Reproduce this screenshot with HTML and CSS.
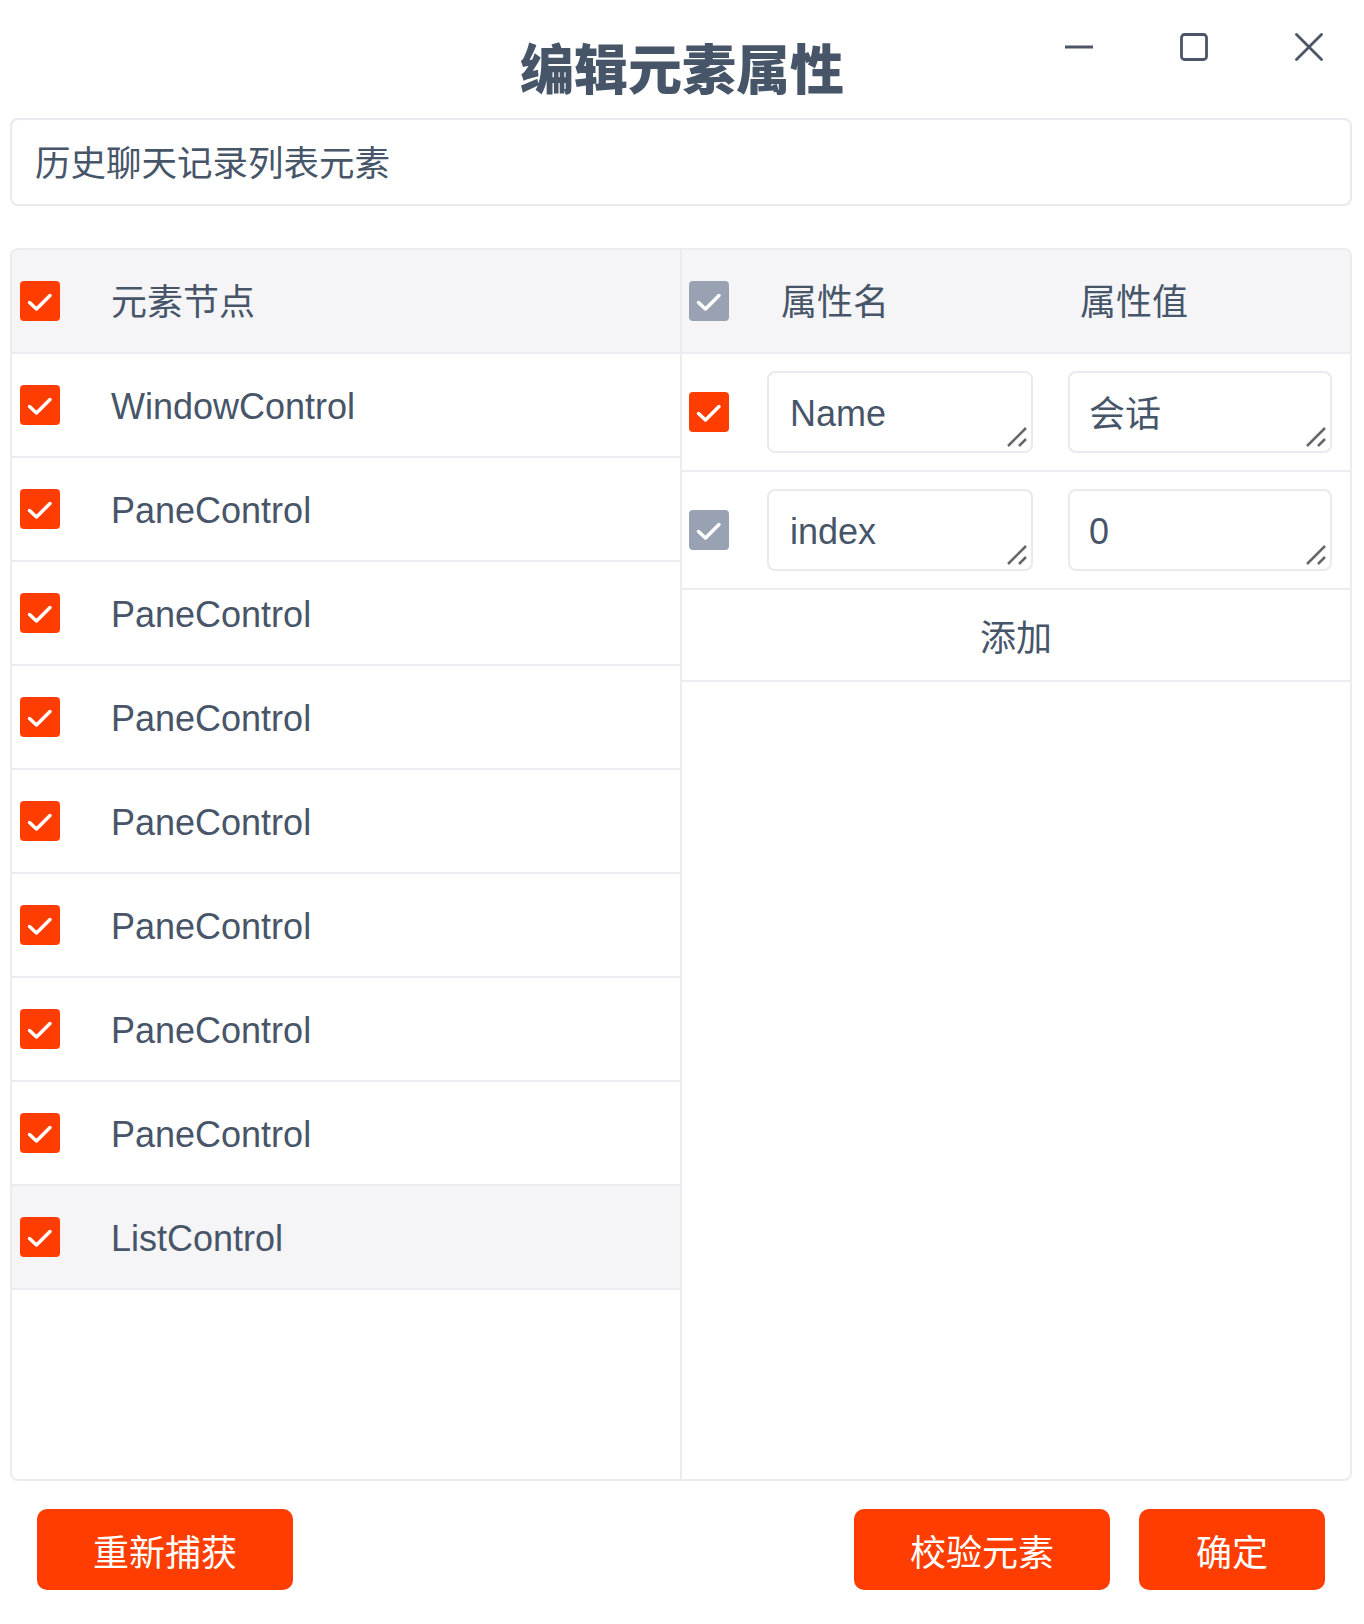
FILE: index.html
```html
<!DOCTYPE html>
<html lang="zh-CN">
<head>
<meta charset="utf-8">
<title>编辑元素属性</title>
<link rel="stylesheet" href="styles.css">
</head>
<body>
<div class="window">
  <header class="titlebar">
    <h1 class="title">编辑元素属性</h1>
    <div class="win-ctrls">
      <svg class="ctrl" viewBox="0 0 28 28" width="28" height="28"><line x1="0" y1="14" x2="28" y2="14"/></svg>
      <svg class="ctrl" viewBox="0 0 28 28" width="28" height="28"><rect x="1.5" y="1.5" width="25" height="25" rx="3"/></svg>
      <svg class="ctrl" viewBox="0 0 28 28" width="28" height="28"><line x1="1.5" y1="1.5" x2="26.5" y2="26.5"/><line x1="26.5" y1="1.5" x2="1.5" y2="26.5"/></svg>
    </div>
  </header>

  <div class="name-input">历史聊天记录列表元素</div>

  <div class="table">
    <div class="col-left">
      <div class="lrow head"><span class="cb on"><svg viewBox="0 0 40 40"><polyline points="9.5,21.5 16.5,28 30,14.5"/></svg></span><span class="label cjk">元素节点</span></div>
      <div class="lrow"><span class="cb on"><svg viewBox="0 0 40 40"><polyline points="9.5,21.5 16.5,28 30,14.5"/></svg></span><span class="label">WindowControl</span></div>
      <div class="lrow"><span class="cb on"><svg viewBox="0 0 40 40"><polyline points="9.5,21.5 16.5,28 30,14.5"/></svg></span><span class="label">PaneControl</span></div>
      <div class="lrow"><span class="cb on"><svg viewBox="0 0 40 40"><polyline points="9.5,21.5 16.5,28 30,14.5"/></svg></span><span class="label">PaneControl</span></div>
      <div class="lrow"><span class="cb on"><svg viewBox="0 0 40 40"><polyline points="9.5,21.5 16.5,28 30,14.5"/></svg></span><span class="label">PaneControl</span></div>
      <div class="lrow"><span class="cb on"><svg viewBox="0 0 40 40"><polyline points="9.5,21.5 16.5,28 30,14.5"/></svg></span><span class="label">PaneControl</span></div>
      <div class="lrow"><span class="cb on"><svg viewBox="0 0 40 40"><polyline points="9.5,21.5 16.5,28 30,14.5"/></svg></span><span class="label">PaneControl</span></div>
      <div class="lrow"><span class="cb on"><svg viewBox="0 0 40 40"><polyline points="9.5,21.5 16.5,28 30,14.5"/></svg></span><span class="label">PaneControl</span></div>
      <div class="lrow"><span class="cb on"><svg viewBox="0 0 40 40"><polyline points="9.5,21.5 16.5,28 30,14.5"/></svg></span><span class="label">PaneControl</span></div>
      <div class="lrow selected"><span class="cb on"><svg viewBox="0 0 40 40"><polyline points="9.5,21.5 16.5,28 30,14.5"/></svg></span><span class="label">ListControl</span></div>
    </div>

    <div class="col-right">
      <div class="rrow head">
        <span class="cb off"><svg viewBox="0 0 40 40"><polyline points="9.5,21.5 16.5,28 30,14.5"/></svg></span>
        <span class="hlabel">属性名</span>
        <span class="hlabel">属性值</span>
      </div>
      <div class="rrow">
        <span class="cb on"><svg viewBox="0 0 40 40"><polyline points="9.5,21.5 16.5,28 30,14.5"/></svg></span>
        <div class="field">Name<svg class="grip" viewBox="0 0 22 22"><line x1="2" y1="20" x2="20" y2="2"/><line x1="13" y1="20" x2="20" y2="13"/></svg></div>
        <div class="field cjk">会话<svg class="grip" viewBox="0 0 22 22"><line x1="2" y1="20" x2="20" y2="2"/><line x1="13" y1="20" x2="20" y2="13"/></svg></div>
      </div>
      <div class="rrow">
        <span class="cb off"><svg viewBox="0 0 40 40"><polyline points="9.5,21.5 16.5,28 30,14.5"/></svg></span>
        <div class="field">index<svg class="grip" viewBox="0 0 22 22"><line x1="2" y1="20" x2="20" y2="2"/><line x1="13" y1="20" x2="20" y2="13"/></svg></div>
        <div class="field">0<svg class="grip" viewBox="0 0 22 22"><line x1="2" y1="20" x2="20" y2="2"/><line x1="13" y1="20" x2="20" y2="13"/></svg></div>
      </div>
      <div class="add-row">添加</div>
    </div>
  </div>

  <div class="actions">
    <button class="btn">重新捕获</button>
    <span class="spacer"></span>
    <button class="btn">校验元素</button>
    <button class="btn narrow">确定</button>
  </div>
</div>
</body>
</html>
```

FILE: styles.css
```css
* { box-sizing: border-box; }

html, body {
  margin: 0;
  padding: 0;
  background: #ffffff;
}

body {
  font-family: "Liberation Sans", "Noto Sans CJK SC", sans-serif;
  color: #475569;
}

.window {
  width: 1364px;
  height: 1624px;
  position: relative;
}

/* title bar */
.titlebar {
  height: 118px;
  display: flex;
  align-items: center;
  justify-content: center;
  padding-top: 16px;
  position: relative;
}

.title {
  margin: 0;
  font-size: 54px;
  line-height: 1;
  font-weight: 800;
  color: #475569;
  font-family: "Noto Sans CJK SC", sans-serif;
}

.win-ctrls {
  position: absolute;
  top: 33px;
  left: 1065px;
  display: flex;
  gap: 87px;
}

.ctrl {
  display: block;
  fill: none;
  stroke: #4b5567;
  stroke-width: 2.8;
  stroke-linecap: round;
}

/* name input */
.name-input {
  margin: 0 12px 0 10px;
  height: 88px;
  border: 2px solid #e9e9ee;
  border-radius: 8px;
  padding-left: 23px;
  padding-bottom: 4px;
  display: flex;
  align-items: center;
  font-size: 35.5px;
  font-family: "Noto Sans CJK SC", sans-serif;
  color: #475569;
}

/* table */
.table {
  margin: 42px 12px 0 10px;
  height: 1233px;
  border: 2px solid #ebebf0;
  border-radius: 8px;
  display: grid;
  grid-template-columns: 670px 1fr;
  overflow: hidden;
}

.col-left {
  border-right: 2px solid #ebebf0;
}

.lrow {
  height: 104px;
  border-bottom: 2px solid #ebebf0;
  display: flex;
  align-items: center;
  padding-left: 8px;
  gap: 51px;
  font-size: 36px;
}

.lrow.head {
  background: #f5f5f8;
}

.lrow.selected {
  background: #f5f5f8;
}

.label {
  line-height: 1;
  position: relative;
  top: 2px;
}

.label.cjk {
  font-family: "Noto Sans CJK SC", sans-serif;
  top: -2px;
}

.cb {
  width: 40px;
  height: 40px;
  border-radius: 4px;
  display: inline-flex;
  flex: none;
}

.cb svg {
  width: 40px;
  height: 40px;
  fill: none;
  stroke: #ffffff;
  stroke-width: 3.5;
  stroke-linecap: round;
  stroke-linejoin: round;
}

.cb.on { background: #ff3d00; }
.cb.off { background: #98a2b3; }

/* right column */
.rrow {
  height: 118px;
  border-bottom: 2px solid #ebebf0;
  display: grid;
  grid-template-columns: 78px 301px 264px;
  align-items: center;
  padding: 0 0 0 7px;
}

.rrow .field:first-of-type {
  width: 266px;
}

.rrow.head {
  height: 104px;
  background: #f5f5f8;
}

.hlabel {
  font-size: 36px;
  line-height: 1;
  padding-left: 14px;
  font-family: "Noto Sans CJK SC", sans-serif;
  position: relative;
  top: -2px;
}

.hlabel + .hlabel {
  padding-left: 12px;
}

.field {
  position: relative;
  height: 82px;
  border: 2px solid #e9e9ee;
  border-radius: 8px;
  padding-left: 21px;
  padding-top: 3px;
  display: flex;
  align-items: center;
  font-size: 36px;
  color: #475569;
}

.field.cjk {
  font-family: "Noto Sans CJK SC", sans-serif;
  padding-left: 18px;
  padding-top: 0;
  padding-bottom: 2px;
}

.field:last-child {
  padding-left: 19px;
}

.grip {
  position: absolute;
  right: 3px;
  bottom: 3px;
  width: 22px;
  height: 22px;
  stroke: #666666;
  stroke-width: 2.5;
}

.add-row {
  height: 92px;
  border-bottom: 2px solid #ebebf0;
  display: flex;
  align-items: center;
  justify-content: center;
  font-size: 36px;
  font-family: "Noto Sans CJK SC", sans-serif;
}

/* actions */
.actions {
  margin-top: 28px;
  padding: 0 39px 0 37px;
  display: flex;
  gap: 29px;
}

.spacer {
  flex: 1;
}

.btn {
  width: 256px;
  height: 81px;
  border: none;
  border-radius: 10px;
  background: #ff3d00;
  color: #ffffff;
  font-size: 36px;
  font-family: "Noto Sans CJK SC", sans-serif;
  padding: 0;
}

.btn.narrow {
  width: 186px;
}
```
